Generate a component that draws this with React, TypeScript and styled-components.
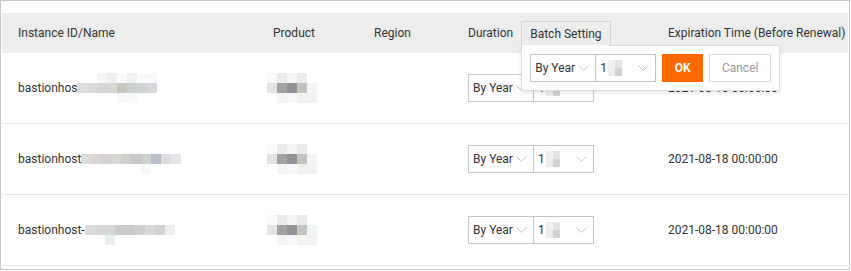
import React from 'react';
import styled, { createGlobalStyle } from 'styled-components';

const GlobalStyle = createGlobalStyle`
  body {
    margin: 0;
    background: #fff;
    font-family: Roboto, "Liberation Sans", Arial, sans-serif;
    font-size: 12px;
    color: #333;
  }
`;

const COLUMNS = '255px 101px 94px 200px 195px';

const Frame = styled.div`
  width: 850px;
  height: 270px;
  box-sizing: border-box;
  border: 1px solid #c8c8c8;
  padding: 12px 1px 0 1px;
  background: #fff;
`;

const HeaderRow = styled.div`
  display: grid;
  grid-template-columns: ${COLUMNS};
  height: 40px;
  align-items: center;
  background: #ededed;
`;

const BodyRow = styled.div`
  display: grid;
  grid-template-columns: ${COLUMNS};
  height: 71px;
  box-sizing: border-box;
  align-items: center;
  border-bottom: 1px solid #e8e8e8;
`;

const Cell = styled.div`
  display: flex;
  align-items: center;
  padding-left: 16px;
  white-space: nowrap;
  gap: 7px;
`;

const BatchWrap = styled.div`
  position: relative;
  margin-left: 1px;
`;

const BatchButton = styled.div`
  height: 24px;
  box-sizing: border-box;
  display: flex;
  align-items: center;
  padding: 0 8px;
  border: 1px solid #d4d4d4;
  border-bottom: none;
  background: #ededed;
  color: #333;
`;

const Popover = styled.div`
  position: absolute;
  top: 24px;
  left: 0;
  z-index: 10;
  display: flex;
  align-items: center;
  gap: 6px;
  padding: 9px 8px 8px 8px;
  background: #fff;
  border: 1px solid #dedede;
  border-top: none;
  box-shadow: 0 2px 4px rgba(0, 0, 0, 0.1);

  &::before {
    content: '';
    position: absolute;
    top: 0;
    left: 86px;
    right: 0;
    height: 1px;
    background: #dedede;
  }
`;

const SelectGroup = styled.div`
  display: flex;
`;

const Select = styled.div<{ $width: number; $joined?: boolean }>`
  width: ${({ $width }) => $width}px;
  height: 28px;
  box-sizing: border-box;
  display: flex;
  align-items: center;
  justify-content: space-between;
  padding: 0 6px 0 4px;
  border: 1px solid #c4c6cf;
  ${({ $joined }) => ($joined ? 'border-left: none;' : '')}
  background: #fff;
  color: #333;
`;

const SelectValue = styled.span`
  display: flex;
  align-items: center;
`;

const OkButton = styled.div`
  width: 41px;
  height: 28px;
  box-sizing: border-box;
  display: flex;
  align-items: center;
  justify-content: center;
  background: #ff6a00;
  color: #fff;
  font-weight: bold;
`;

const CancelButton = styled.div`
  width: 62px;
  height: 28px;
  box-sizing: border-box;
  display: flex;
  align-items: center;
  justify-content: center;
  border: 1px solid #dcdcdc;
  color: #999;
  background: #fff;
`;

const MosaicGrid = styled.span<{ $cols: number; $w: number; $h: number; $offset: number }>`
  display: inline-grid;
  grid-template-columns: repeat(${({ $cols }) => $cols}, ${({ $w }) => $w}px);
  grid-auto-rows: ${({ $h }) => $h}px;
  margin-left: ${({ $offset }) => $offset}px;
`;

const MosaicCell = styled.span<{ $c: string }>`
  background: ${({ $c }) => $c || 'transparent'};
`;

const Chevron: React.FC = () => (
  <svg width="11" height="7" viewBox="0 0 11 7">
    <polyline points="0.5,0.5 5.5,5.5 10.5,0.5" fill="none" stroke="#c4c6cf" strokeWidth="1" />
  </svg>
);

const Mosaic: React.FC<{ cells: string[][]; w?: number; h?: number; offset?: number }> = ({
  cells,
  w = 10,
  h = 10,
  offset = 0,
}) => (
  <MosaicGrid $cols={cells[0].length} $w={w} $h={h} $offset={offset}>
    {cells.flat().map((c, i) => (
      <MosaicCell key={i} $c={c} />
    ))}
  </MosaicGrid>
);

const VALUE_BLUR = [
  ['#f0f0f0', '#e4e4e4'],
  ['#ececec', '#d2d2d2'],
];

const DurationSelects: React.FC = () => (
  <SelectGroup>
    <Select $width={66}>
      <span>By Year</span>
      <Chevron />
    </Select>
    <Select $width={60} $joined>
      <SelectValue>
        1<Mosaic cells={VALUE_BLUR} w={7} h={8} offset={1} />
      </SelectValue>
      <Chevron />
    </Select>
  </SelectGroup>
);

const PRODUCT_BLUR = [
  ['#fafafa', '#ebebeb', '#f5f5f5', '#ebebeb', ''],
  ['#e3e3e3', '#a2a2a2', '#919196', '#c6c2c2', '#f0f5f5'],
  ['', '#f4f4f4', '#f8f8f8', '#f4f0ec', '#eef2f4'],
];

const rows = [
  {
    name: 'bastionhos',
    blur: [
      ['', '', '#f6f6f6', '#efefef', '#fafaf8', '#f1f1f1', '#fafafa', '#f7f8fa'],
      ['#dcdcdc', '#d9d9d9', '#d6d5d5', '#d7d7d4', '#c8c5bd', '#ccd1d5', '#cfd2d0', '#d8d6dc'],
      ['', '', '', '', '#f8f8f8', '#f9f9f9', '', ''],
    ],
    date: '2021-08-18 00:00:00',
  },
  {
    name: 'bastionhost',
    blur: [
      ['', '', '', '', '', '', '', '', '', ''],
      ['#dcdcdc', '#dad6d8', '#d6d2d4', '#dad6d2', '#cfd0cf', '#c9c8cc', '#cdd1cd', '#b9bdc9', '#dcdcdc', '#e4e4ea'],
      ['', '', '', '', '', '', '#f6f6f6', '', '', ''],
    ],
    date: '2021-08-18 00:00:00',
  },
  {
    name: 'bastionhost-',
    blur: [
      ['', '', '', '', '', '', '', '', ''],
      ['#dcdcdc', '#d8d8d8', '#d4dadb', '#cdc9c9', '#c8c8c8', '#cdd1d1', '#d9d9d9', '#d5d1cf', '#eeeeee'],
      ['', '', '#e6eef0', '', '', '', '', '', ''],
    ],
    date: '2021-08-18 00:00:00',
  },
];

const App: React.FC = () => (
  <>
    <GlobalStyle />
    <Frame>
      <HeaderRow>
        <Cell>Instance ID/Name</Cell>
        <Cell>Product</Cell>
        <Cell>Region</Cell>
        <Cell>
          Duration
          <BatchWrap>
            <BatchButton>Batch Setting</BatchButton>
            <Popover>
              <DurationSelects />
              <OkButton>OK</OkButton>
              <CancelButton>Cancel</CancelButton>
            </Popover>
          </BatchWrap>
        </Cell>
        <Cell>Expiration Time (Before Renewal)</Cell>
      </HeaderRow>
      {rows.map((row, i) => (
        <BodyRow key={i}>
          <Cell>
            <span>{row.name}</span>
            <Mosaic cells={row.blur} offset={-7} />
          </Cell>
          <Cell>
            <Mosaic cells={PRODUCT_BLUR} offset={-6} />
          </Cell>
          <Cell />
          <Cell>
            <DurationSelects />
          </Cell>
          <Cell>{row.date}</Cell>
        </BodyRow>
      ))}
    </Frame>
  </>
);

export default App;
